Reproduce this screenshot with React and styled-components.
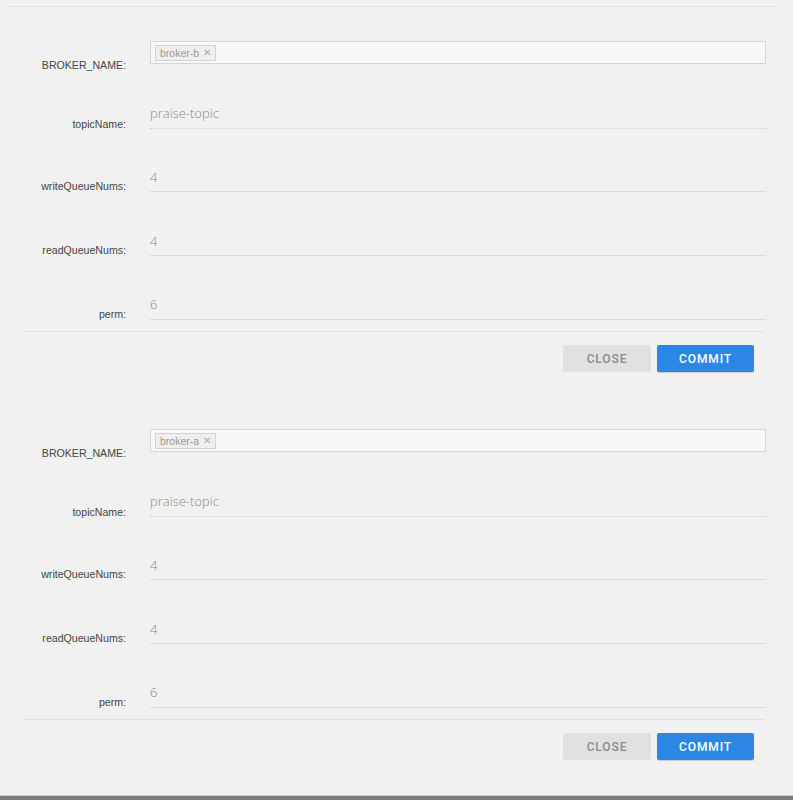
import React from "react";
import styled, { createGlobalStyle } from "styled-components";

const GlobalStyle = createGlobalStyle`
  html, body {
    margin: 0;
    padding: 0;
    background: #f1f1f1;
  }
`;

const Page = styled.div`
  height: 800px;
  display: flex;
  flex-direction: column;
  background: #f1f1f1;
  font-family: "Liberation Sans", Arial, sans-serif;
  overflow: hidden;
`;

const TopRule = styled.div`
  height: 6px;
  margin: 0 15px 0 8px;
  border-bottom: 1px solid #e3e3e3;
  box-shadow: 0 -1px 0 #fafafa inset;
`;

const Section = styled.div`
  display: flex;
  flex-direction: column;
  padding-bottom: 23px;
`;

const Row = styled.div`
  display: flex;
  align-items: flex-end;
  height: ${(p) => p.h}px;
  padding-right: 27px;
`;

const Label = styled.div`
  width: 126px;
  flex: none;
  text-align: right;
  font-size: 10.6px;
  line-height: 14px;
  color: #444;
  margin-right: 24px;
`;

const Field = styled.div`
  flex: 1;
  font-family: "Open Sans", sans-serif;
  font-weight: 300;
  font-size: 13px;
  line-height: 20px;
  color: #8a8a8a;
  padding-bottom: ${(p) => p.pb || 4}px;
  margin-bottom: ${(p) => p.mb || 1}px;
  border-bottom: 1px ${(p) => (p.dotted ? "dotted #cfcfcf" : "solid #dadada")};
`;

const TagBox = styled.div`
  flex: 1;
  height: 21px;
  margin-bottom: 8px;
  border: 1px solid #d6d6d6;
  background: #f8f8f8;
  display: flex;
  align-items: center;
  padding-left: 4px;
`;

const Tag = styled.span`
  display: inline-flex;
  align-items: center;
  height: 14px;
  padding: 0 4px;
  border: 1px solid #d2d2d2;
  background: #efefef;
  color: #9a9a9a;
  font-size: 10.5px;
  font-family: "Liberation Sans", Arial, sans-serif;
  gap: 4px;
`;

const TagX = styled.span`
  color: #aaa;
  font-size: 10px;
`;

const Divider = styled.div`
  height: 1px;
  background: #e3e3e3;
  margin: 10px 28px 0 22px;
`;

const Actions = styled.div`
  display: flex;
  justify-content: flex-end;
  gap: 6px;
  padding: 13px 39px 0 0;
`;

const Button = styled.button`
  height: 27px;
  width: ${(p) => p.w}px;
  border: none;
  border-radius: 2px;
  font-family: Roboto, sans-serif;
  font-weight: 500;
  font-size: 12px;
  letter-spacing: 0.9px;
  background: ${(p) => (p.primary ? "#2b87e3" : "#e1e1e1")};
  color: ${(p) => (p.primary ? "#ffffff" : "#8c8c8c")};
  box-shadow: ${(p) => (p.primary ? "0 1px 1px rgba(0,0,0,0.15)" : "none")};
`;

const BottomBar = styled.div`
  margin-top: auto;
  height: 4px;
  border-top: 1px solid #d0d0d0;
  background: #7a7a7a;
`;

const rows = [
  { label: "topicName", value: "praise-topic", h: 59, pb: 5, mb: 2, dotted: true },
  { label: "writeQueueNums", value: "4", h: 62, pb: 4, mb: 1 },
  { label: "readQueueNums", value: "4", h: 64, pb: 4, mb: 1 },
  { label: "perm", value: "6", h: 64, pb: 5, mb: 1 },
];

function TopicForm({ broker }) {
  return (
    <Section>
      <Row h={65}>
        <Label>BROKER_NAME:</Label>
        <TagBox>
          <Tag>
            {broker}
            <TagX>✕</TagX>
          </Tag>
        </TagBox>
      </Row>
      {rows.map((r) => (
        <Row key={r.label} h={r.h}>
          <Label>{r.label}:</Label>
          <Field pb={r.pb} mb={r.mb} dotted={r.dotted}>
            {r.value}
          </Field>
        </Row>
      ))}
      <Divider />
      <Actions>
        <Button w={88}>CLOSE</Button>
        <Button w={97} primary>
          COMMIT
        </Button>
      </Actions>
    </Section>
  );
}

export default function App() {
  return (
    <Page>
      <GlobalStyle />
      <TopRule />
      <TopicForm broker="broker-b" />
      <TopicForm broker="broker-a" />
      <BottomBar />
    </Page>
  );
}
